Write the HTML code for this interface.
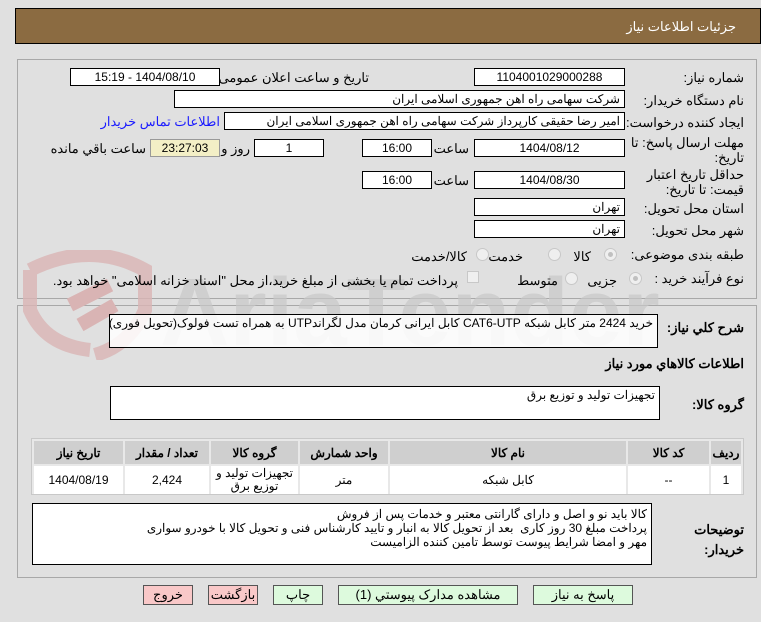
<!DOCTYPE html>
<html><head><meta charset="utf-8"><style>
*{box-sizing:border-box;margin:0;padding:0}
body{width:761px;height:622px;background:#e0e0e0;font-family:Tahoma,"Liberation Sans","Noto Sans CJK SC",sans-serif;font-size:12px;color:#000;position:relative;overflow:hidden;direction:rtl}
.a{position:absolute;white-space:nowrap}
.box{position:absolute;background:#fff;border:1px solid #000;padding:0 4px;line-height:16px;text-align:right;overflow:hidden;white-space:nowrap}
.c{text-align:center}
.lbl{position:absolute;white-space:nowrap;font-size:13px}
.rad{position:absolute;width:13px;height:13px;border-radius:50%;border:1px solid #c8c8c8;background:#efefef}
.rad.on::after{content:"";position:absolute;left:3px;top:3px;width:5px;height:5px;border-radius:50%;background:#c0c0c0}
.btn{position:absolute;top:585px;height:20px;border:1px solid #555;font-size:13px;text-align:center;line-height:18px}
table{border-collapse:separate;border-spacing:2px}
td{background:#fff;text-align:center;font-size:12px}
th{background:#cfcfcf;font-size:12px;height:23px}
</style></head><body>
<div class="a" style="left:15px;top:8px;width:746px;height:36px;background:#8b6b41;border:1px solid #000"></div>
<div class="a" style="right:25px;top:19px;color:#fff;font-size:13px">جزئیات اطلاعات نیاز</div>

<div class="a" style="left:17px;top:59px;width:740px;height:240px;border:1px solid #a8a8a8"></div>
<div class="a" style="left:17px;top:305px;width:740px;height:273px;border:1px solid #a8a8a8"></div>

<!-- watermark -->
<svg class="a" style="left:20px;top:250px" width="640" height="110" viewBox="0 0 640 110">
<path d="M10 20 Q70 -10 125 20 L125 60 Q110 95 75 105 M10 20 L10 60 Q25 95 70 100" fill="none" stroke="#d9b4b4" stroke-width="14" opacity=".8"/>
<path d="M50 55 L90 35 M60 75 L95 55" stroke="#d9b4b4" stroke-width="14"/>
<text x="140" y="95" font-family="Liberation Sans" font-size="96" font-weight="bold" fill="#c8c8c8" opacity=".7" direction="ltr">AriaTender.net</text>
</svg>

<div class="lbl" style="right:17px;top:70px">شماره نیاز:</div>
<div class="box c" style="left:474px;top:68px;width:151px;height:18px">1104001029000288</div>
<div class="lbl" style="right:392px;top:70px">تاریخ و ساعت اعلان عمومی:</div>
<div class="box c" style="left:70px;top:68px;width:150px;height:18px">1404/08/10 - 15:19</div>

<div class="lbl" style="right:17px;top:93px">نام دستگاه خریدار:</div>
<div class="box" style="left:174px;top:90px;width:451px;height:18px">شرکت سهامی راه اهن جمهوری اسلامی ایران</div>

<div class="lbl" style="right:17px;top:115px">ایجاد کننده درخواست:</div>
<div class="box" style="left:224px;top:112px;width:401px;height:18px">امیر رضا  حقیقی کارپرداز شرکت سهامی راه اهن جمهوری اسلامی ایران</div>
<div class="lbl" style="right:541px;top:114px;color:#1a1aff">اطلاعات تماس خریدار</div>

<div class="lbl" style="right:17px;top:135px;line-height:15px;text-align:right">مهلت ارسال پاسخ: تا<br>تاریخ:</div>
<div class="box c" style="left:474px;top:139px;width:151px;height:18px">1404/08/12</div>
<div class="lbl" style="right:292px;top:141px">ساعت</div>
<div class="box c" style="left:362px;top:139px;width:70px;height:18px">16:00</div>
<div class="box c" style="left:254px;top:139px;width:70px;height:18px">1</div>
<div class="lbl" style="right:511px;top:141px">روز و</div>
<div class="box c" style="left:150px;top:139px;width:70px;height:18px;background:#f3efc6;border-color:#999">23:27:03</div>
<div class="lbl" style="right:615px;top:141px">ساعت باقي مانده</div>

<div class="lbl" style="right:17px;top:167px;line-height:15px">حداقل تاریخ اعتبار<br>قیمت: تا تاریخ:</div>
<div class="box c" style="left:474px;top:171px;width:151px;height:18px">1404/08/30</div>
<div class="lbl" style="right:292px;top:173px">ساعت</div>
<div class="box c" style="left:362px;top:171px;width:70px;height:18px">16:00</div>

<div class="lbl" style="right:17px;top:201px">استان محل تحویل:</div>
<div class="box" style="left:474px;top:198px;width:151px;height:18px">تهران</div>
<div class="lbl" style="right:17px;top:223px">شهر محل تحویل:</div>
<div class="box" style="left:474px;top:220px;width:151px;height:18px">تهران</div>

<div class="lbl" style="right:17px;top:247px">طبقه بندی موضوعی:</div>
<div class="rad on" style="left:604px;top:248px"></div><div class="lbl" style="right:170px;top:249px">کالا</div>
<div class="rad" style="left:548px;top:248px"></div><div class="lbl" style="right:238px;top:249px">خدمت</div>
<div class="rad" style="left:476px;top:248px"></div><div class="lbl" style="right:294px;top:249px">کالا/خدمت</div>

<div class="lbl" style="right:17px;top:271px">نوع فرآیند خرید :</div>
<div class="rad on" style="left:629px;top:272px"></div><div class="lbl" style="right:144px;top:273px">جزیی</div>
<div class="rad" style="left:565px;top:272px"></div><div class="lbl" style="right:203px;top:273px">متوسط</div>
<div class="a" style="left:467px;top:271px;width:12px;height:12px;border:1px solid #c8c8c8;background:#efefef"></div>
<div class="lbl" style="right:303px;top:273px">پرداخت تمام یا بخشی از مبلغ خرید،از محل "اسناد خزانه اسلامی" خواهد بود.</div>

<div class="lbl" style="right:17px;top:320px;font-weight:bold">شرح کلي نياز:</div>
<div class="box" style="left:109px;top:314px;width:549px;height:34px;background:rgba(255,255,255,.85)">خرید 2424 متر کابل شبکه CAT6-UTP کابل ایرانی کرمان مدل لگراندUTP به همراه تست فولوک(تحویل فوری)</div>
<div class="lbl" style="right:17px;top:356px;font-weight:bold">اطلاعات کالاهاي مورد نياز</div>
<div class="lbl" style="right:17px;top:397px;font-weight:bold">گروه کالا:</div>
<div class="box" style="left:110px;top:386px;width:550px;height:34px">تجهیزات تولید و توزیع برق</div>

<div class="a" style="left:31px;top:438px;width:713px;height:57px;border:1px solid #c8c8c8;background:#e8e8e8">
<table style="width:100%"><tr>
<th style="width:30px">ردیف</th><th style="width:81px">کد کالا</th><th style="width:236px">نام کالا</th><th style="width:88px">واحد شمارش</th><th style="width:87px">گروه کالا</th><th style="width:84px">تعداد / مقدار</th><th>تاریخ نیاز</th></tr>
<tr style="height:28px"><td>1</td><td>--</td><td>کابل شبکه</td><td>متر</td><td style="line-height:13px">تجهیزات تولید و<br>توزیع برق</td><td>2,424</td><td>1404/08/19</td></tr></table></div>

<div class="lbl" style="right:17px;top:520px;font-weight:bold;line-height:20px">توضیحات<br>خریدار:</div>
<div class="box" style="left:32px;top:503px;width:620px;height:62px;white-space:pre;line-height:14px;padding-top:3px">کالا باید نو و اصل و دارای گارانتی معتبر و خدمات پس از فروش
پرداخت مبلغ 30 روز کاری  بعد از تحویل کالا به انبار و تایید کارشناس فنی و تحویل کالا با خودرو سواری
مهر و امضا شرایط پیوست توسط تامین کننده الزامیست</div>

<div class="btn" style="left:533px;width:100px;background:#ddfadd">پاسخ به نیاز</div>
<div class="btn" style="left:338px;width:180px;background:#ddfadd">مشاهده مدارک پیوستي (1)</div>
<div class="btn" style="left:273px;width:50px;background:#ddfadd">چاپ</div>
<div class="btn" style="left:208px;width:50px;background:#f9c8c8">بازگشت</div>
<div class="btn" style="left:143px;width:50px;background:#f9c8c8">خروج</div>
</body></html>
